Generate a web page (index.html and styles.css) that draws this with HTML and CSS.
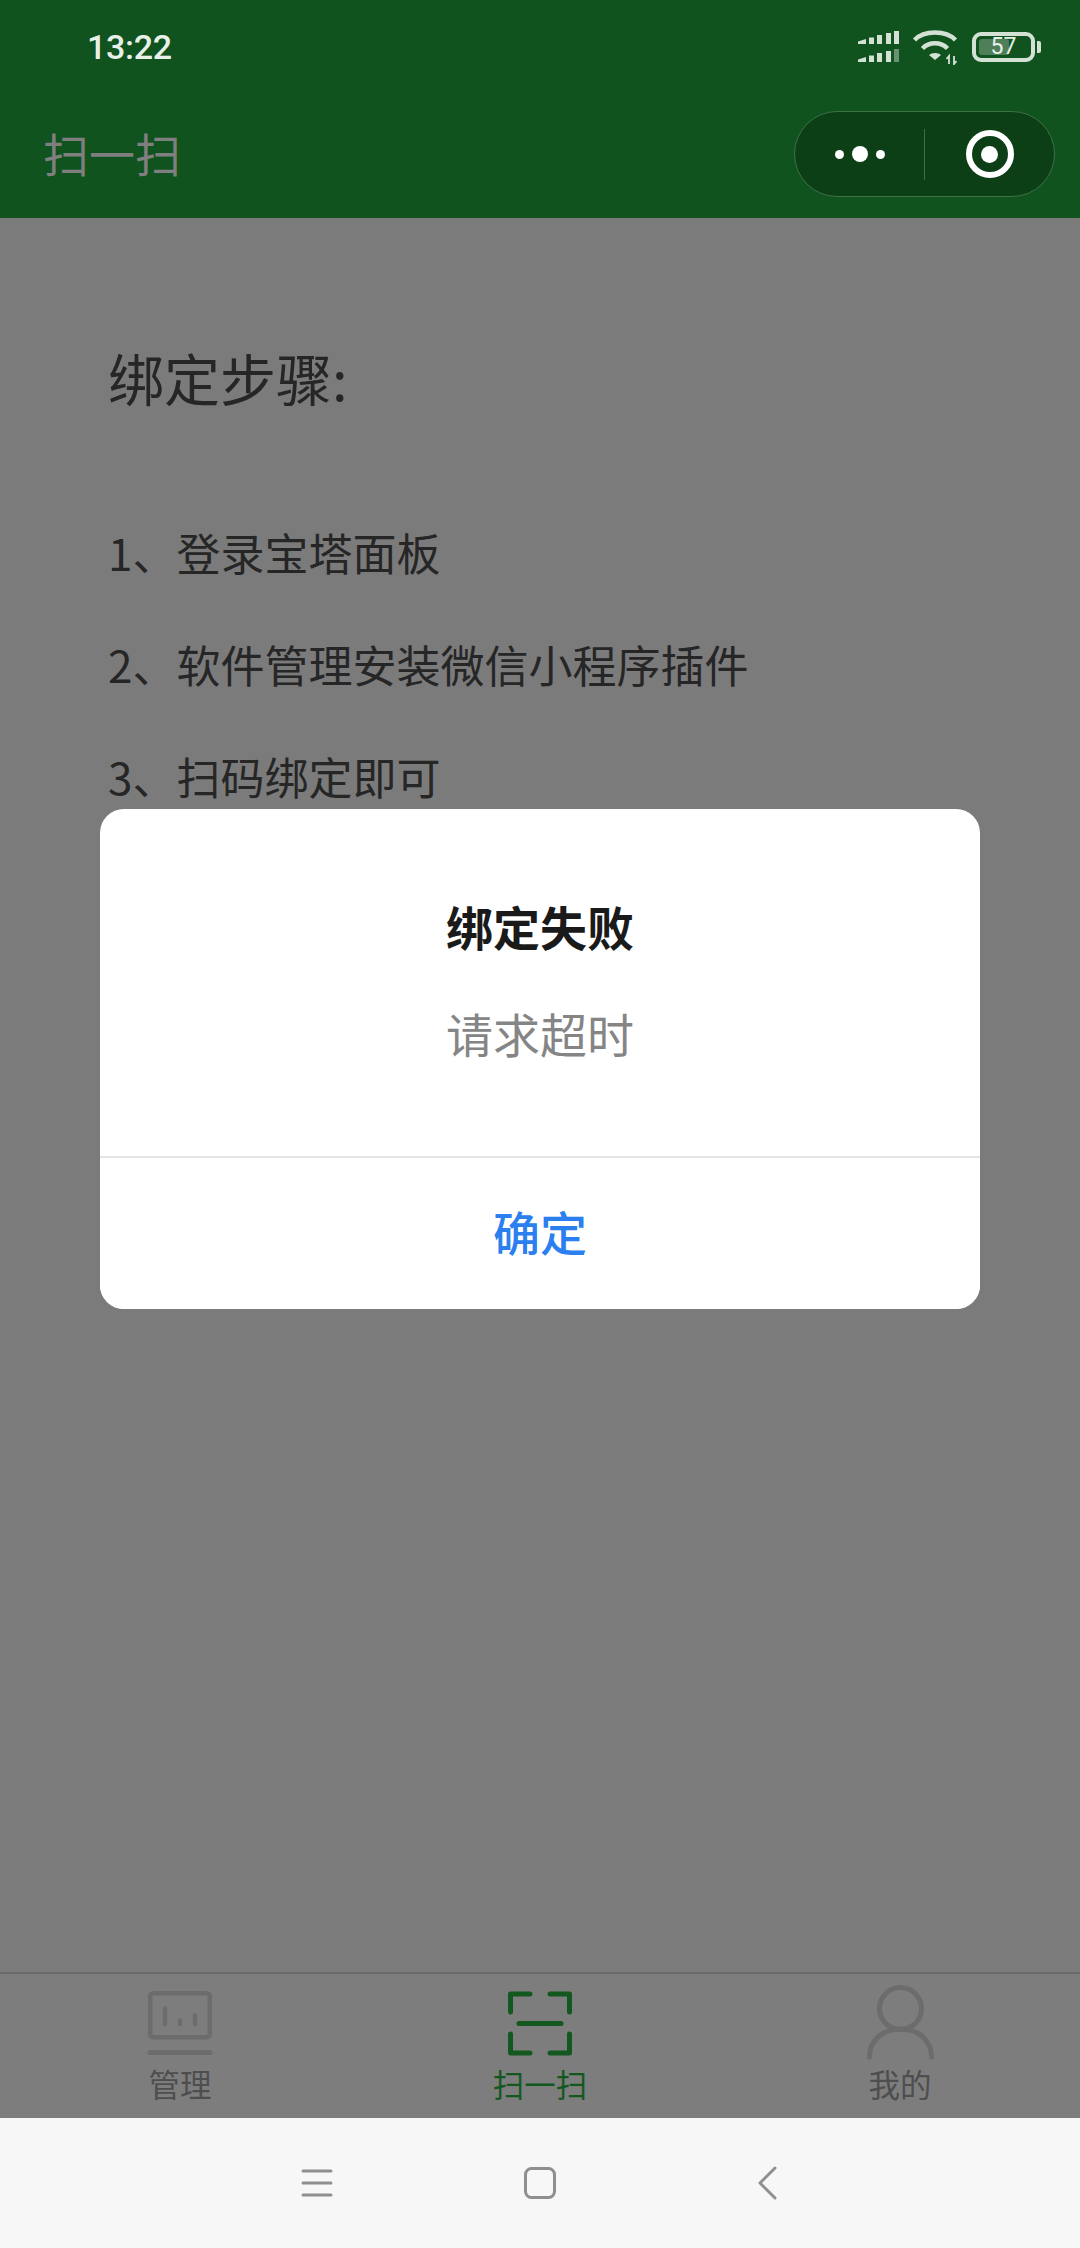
FILE: index.html
```html
<!DOCTYPE html>
<html lang="zh-CN">
<head>
<meta charset="utf-8">
<title>扫一扫</title>
<link rel="stylesheet" href="styles.css">
</head>
<body>
<div class="screen">
  <header class="top">
    <div class="status">
      <span class="time">13:22</span>
      <div class="status-icons">
        <svg class="signal" width="42" height="36" viewBox="0 0 42 36">
          <g fill="#d3e2d5">
            <path d="M1 12.500l8-2.500v5H1zM12 8.500h5V15h-5zM20 6h5v9h-5zM29 4h5v11h-5zM37 2h5v13h-5z"/>
            <path d="M1 30.500l8-2.500v5H1zM12 26.500h5V33h-5zM20 24h5v9h-5zM29 22h5v11h-5z"/>
            <path d="M37 20h5v13h-5z" opacity=".45"/>
          </g>
        </svg>
        <svg class="wifi" width="46" height="36" viewBox="0 0 46 36">
          <g fill="none" stroke="#d3e2d5" stroke-width="4.500">
            <path d="M2.500 11C12 1 34 1 43.500 11"/>
            <path d="M10.500 19.500C17 12.500 29 12.500 35.500 19.500"/>
          </g>
          <path d="M23 24c2.500 0 4.500.7 6 2L23 31l-6-5c1.500-1.300 3.500-2 6-2z" fill="#d3e2d5"/>
          <path d="M37 35v-8l-2.500 3M42 27v8l2.500-3" fill="none" stroke="#d3e2d5" stroke-width="1.800"/>
        </svg>
        <div class="battery">
          <div class="battery-body">
            <span class="battery-level"></span>
            <span class="battery-num">57</span>
          </div>
          <span class="battery-cap"></span>
        </div>
      </div>
    </div>
    <div class="nav">
      <h1 class="nav-title">扫一扫</h1>
      <div class="capsule">
        <div class="capsule-side">
          <span class="dot"></span><span class="dot dot-big"></span><span class="dot"></span>
        </div>
        <span class="capsule-line"></span>
        <div class="capsule-side">
          <span class="ring"><span class="ring-core"></span></span>
        </div>
      </div>
    </div>
  </header>

  <main class="content">
    <h2 class="steps-title">绑定步骤:</h2>
    <ol class="steps">
      <li>1、登录宝塔面板</li>
      <li>2、软件管理安装微信小程序插件</li>
      <li>3、扫码绑定即可</li>
    </ol>
  </main>

  <nav class="tabs">
    <div class="tab">
      <svg class="tab-icon" width="72" height="72" viewBox="0 0 72 72">
        <g fill="none" stroke="#6c6c6c" stroke-width="4.500" stroke-linecap="round">
          <rect x="6.200" y="5.200" width="59.600" height="44" rx="3"/>
          <path d="M6 64.500H66" stroke-width="5"/>
          <path d="M21 20.500V36M36 32.500V36M51 27.500V36"/>
        </g>
      </svg>
      <span class="tab-label">管理</span>
    </div>
    <div class="tab tab-active">
      <svg class="tab-icon" width="72" height="72" viewBox="0 0 72 72">
        <g fill="none" stroke="#13591f" stroke-width="5" stroke-linecap="round" stroke-linejoin="round">
          <path d="M26 6H6.500V24"/>
          <path d="M46 6H65.500V24"/>
          <path d="M26 65H6.500V46"/>
          <path d="M46 65H65.500V46"/>
          <path d="M15 35.500H57"/>
        </g>
      </svg>
      <span class="tab-label">扫一扫</span>
    </div>
    <div class="tab">
      <svg class="tab-icon" width="72" height="72" viewBox="0 0 72 72">
        <g fill="none" stroke="#6c6c6c" stroke-width="5" stroke-linecap="round">
          <circle cx="36.500" cy="20.500" r="21"/>
          <path d="M5.500 69C5.500 52 19 41 36.500 41S67.500 52 67.500 69"/>
        </g>
      </svg>
      <span class="tab-label">我的</span>
    </div>
  </nav>

  <footer class="sysbar">
    <svg class="sys-icon" width="36" height="36" viewBox="0 0 36 36">
      <path d="M4 6H32M4 18H32M4 30H32" fill="none" stroke="#8f8f8f" stroke-width="3" stroke-linecap="round"/>
    </svg>
    <svg class="sys-icon sys-home" width="36" height="36" viewBox="0 0 36 36">
      <rect x="3.500" y="3.500" width="29" height="29" rx="6" fill="none" stroke="#8f8f8f" stroke-width="3"/>
    </svg>
    <svg class="sys-icon" width="28" height="36" viewBox="0 0 28 36">
      <path d="M22 3L7 18L22 33" fill="none" stroke="#8f8f8f" stroke-width="3" stroke-linecap="round" stroke-linejoin="round"/>
    </svg>
  </footer>

  <div class="modal-layer">
    <section class="modal">
      <div class="modal-body">
        <h3 class="modal-title">绑定失败</h3>
        <p class="modal-text">请求超时</p>
      </div>
      <button class="modal-btn">确定</button>
    </section>
  </div>
</div>
</body>
</html>
```

FILE: styles.css
```css
* {
  box-sizing: border-box;
  margin: 0;
  padding: 0;
}

html,
body {
  width: 1080px;
  height: 2248px;
  overflow: hidden;
}

body {
  background: #7b7b7b;
  font-family: "Noto Sans CJK SC", "Noto Sans", sans-serif;
}

.screen {
  position: relative;
  display: flex;
  flex-direction: column;
  width: 1080px;
  height: 2248px;
}

/* Header: status row plus mini-program navigation */
.top {
  flex: none;
  height: 218px;
  background: #10531e;
}

.status {
  display: flex;
  align-items: center;
  justify-content: space-between;
  height: 94px;
  padding: 0 39px 0 87px;
}

.time {
  font-family: Roboto, sans-serif;
  font-size: 34px;
  font-weight: 500;
  letter-spacing: -0.3px;
  color: #e8f0e9;
}

.status-icons {
  display: flex;
  align-items: center;
}

.signal {
  margin-right: 13px;
}

.wifi {
  margin-right: 14px;
}

.battery {
  display: flex;
  align-items: center;
}

.battery-body {
  position: relative;
  display: flex;
  align-items: center;
  justify-content: center;
  width: 63px;
  height: 30px;
  border: 4.500px solid #d3e2d5;
  border-radius: 9px;
}

.battery-level {
  position: absolute;
  top: 3px;
  bottom: 3px;
  left: 3px;
  width: 30px;
  border-radius: 3px;
  background: #4f7f59;
}

.battery-num {
  position: relative;
  font-family: Roboto, sans-serif;
  font-size: 23px;
  line-height: 22px;
  color: #e8f0e9;
}

.battery-cap {
  width: 4px;
  height: 12px;
  margin-left: 2px;
  border-radius: 0 2px 2px 0;
  background: #d3e2d5;
}

.nav {
  display: flex;
  align-items: center;
  justify-content: space-between;
  height: 120px;
  padding: 0 25px 0 43px;
}

.nav-title {
  margin-bottom: 4px;
  font-size: 46px;
  font-weight: 400;
  line-height: 60px;
  color: #7f7f7f;
}

.capsule {
  display: flex;
  align-items: center;
  width: 261px;
  height: 86px;
  border: 1.500px solid #3e7048;
  border-radius: 43px;
  background: #0d3f16;
}

.capsule-side {
  display: flex;
  flex: 1;
  align-items: center;
  justify-content: center;
  gap: 8px;
}

.capsule-line {
  width: 1px;
  height: 51px;
  background: #3e7048;
}

.dot {
  width: 9px;
  height: 9px;
  border-radius: 50%;
  background: #fff;
}

.dot-big {
  width: 16px;
  height: 16px;
}

.ring {
  display: flex;
  align-items: center;
  justify-content: center;
  width: 48px;
  height: 48px;
  border: 6px solid #fff;
  border-radius: 50%;
}

.ring-core {
  width: 17px;
  height: 17px;
  border-radius: 50%;
  background: #fff;
}

/* Page body */
.content {
  flex: 1;
  padding: 119px 0 0 108px;
  color: #262626;
}

.steps-title {
  font-size: 56px;
  font-weight: 400;
  line-height: 80px;
}

.steps {
  margin-top: 79px;
  list-style: none;
  font-size: 44px;
  line-height: 112px;
}

/* Tab bar */
.tabs {
  display: flex;
  flex: none;
  height: 146px;
  padding-top: 14px;
  border-top: 2px solid #6a6a6a;
  background: #7d7d7e;
  color: #4e4e4e;
}

.tab {
  display: flex;
  flex: 1;
  flex-direction: column;
  align-items: center;
}

.tab-active {
  color: #13591f;
}

.tab-icon {
  overflow: visible;
}

.tab-label {
  margin-top: 7px;
  font-size: 31.500px;
  line-height: 32px;
}

/* Android navigation keys */
.sysbar {
  display: flex;
  flex: none;
  align-items: center;
  justify-content: center;
  height: 130px;
  background: #f7f7f7;
}

.sys-home {
  margin: 0 195px 0 187px;
}

/* Alert dialog */
.modal-layer {
  position: absolute;
  top: 0;
  left: 0;
  display: flex;
  align-items: center;
  justify-content: center;
  width: 1080px;
  height: 2118px;
}

.modal {
  width: 880px;
  height: 500px;
  overflow: hidden;
  border-radius: 24px;
  background: #fff;
}

.modal-body {
  height: 347px;
  padding-top: 81px;
  text-align: center;
}

.modal-title {
  font-size: 47px;
  font-weight: 700;
  line-height: 72px;
  color: #1a1a1a;
}

.modal-text {
  margin-top: 35px;
  font-size: 47px;
  line-height: 72px;
  color: #858585;
}

.modal-btn {
  display: block;
  width: 100%;
  height: 153px;
  padding-bottom: 6px;
  border: 0;
  border-top: 2px solid #e5e5e5;
  background: #fff;
  font-family: inherit;
  font-size: 47px;
  font-weight: 500;
  color: #2b7fef;
}
```
